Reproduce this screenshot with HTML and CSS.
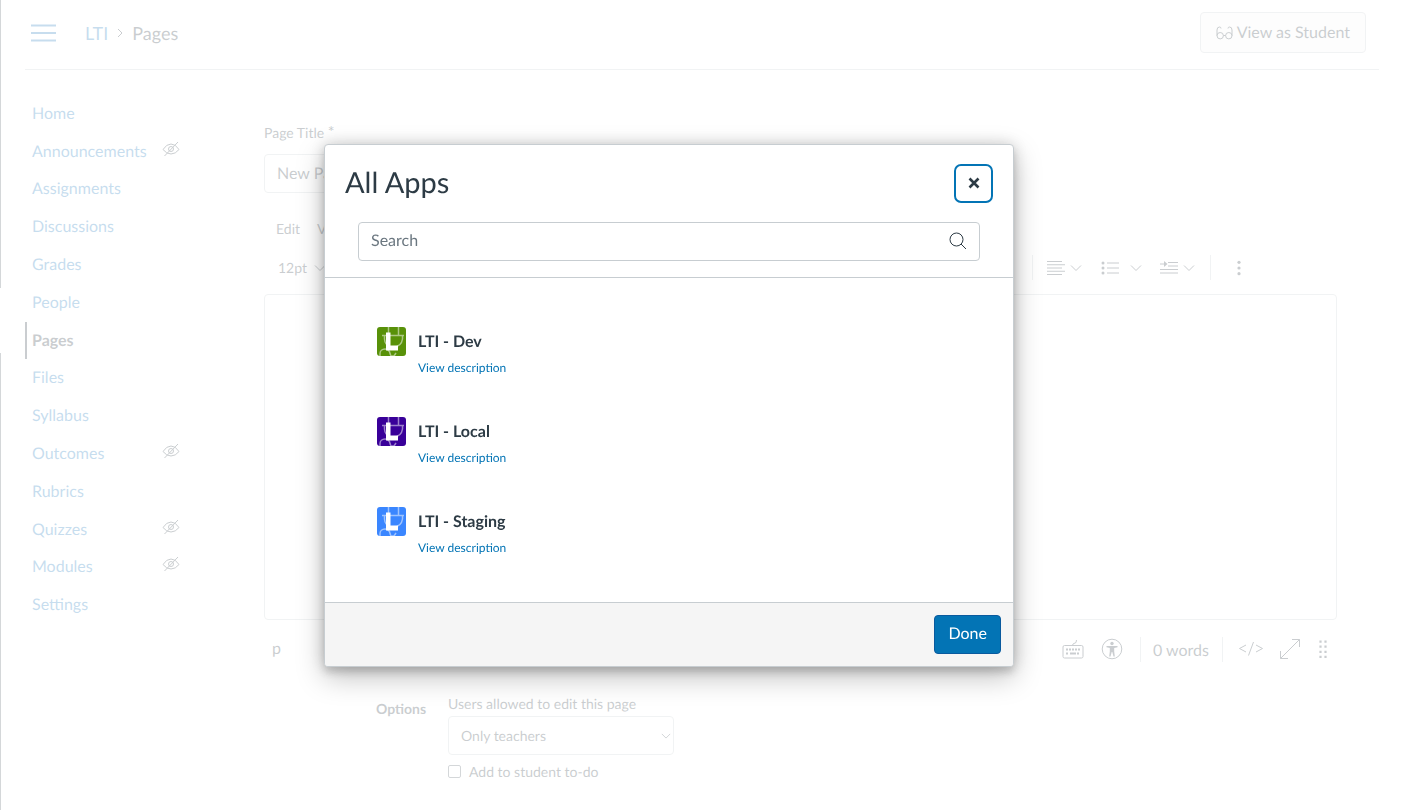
FILE: index.html
```html
<!DOCTYPE html>
<html lang="en">
<head>
<meta charset="utf-8">
<title>LTI: Pages</title>
<link rel="stylesheet" href="styles.css">
</head>
<body>
<svg class="defs" aria-hidden="true">
  <symbol id="hidden" viewBox="0 0 18 16"><path d="M1 8.500Q4.500 3 9 3T17 8.500Q13.500 13 9 13T1 8.500ZM2.500 15 16 1"/><circle cx="9" cy="8" r="2.500"/></symbol>
  <symbol id="chev" viewBox="0 0 12 8"><path d="M1 1.500 6 6.500 11 1.500"/></symbol>
  <symbol id="app" viewBox="0 0 29 29">
    <g fill="none" stroke="#fff" stroke-opacity=".5" stroke-width="1.500"><path d="M11.500 0V8M21.500 0V8M5 8.500H27M7.500 8.500V12Q8 18 13 20M25.500 8.500V12Q24.500 19.500 16 20.500M3 29V26.500A5 4.500 0 0 1 13 26.500L14 29H17L19 26"/></g>
    <path d="M9 5.500h4.500v13h7.500v5H9z" fill="#fff"/>
  </symbol>
</svg>
<div class="page">
  <div class="rail"><span class="rail-top"></span><span class="rail-bottom"></span></div>
  <div class="shell">
    <header class="topbar">
      <button class="icon-btn burger" aria-label="Course navigation"><svg width="25" height="18" viewBox="0 0 25 18"><path d="M0 1.500H25M0 9H25M0 16.500H25"/></svg></button>
      <nav class="crumbs" aria-label="Breadcrumb"><a href="#">LTI</a><svg width="6" height="10" viewBox="0 0 6 10"><path d="M1 1 5 5 1 9"/></svg><span>Pages</span></nav>
      <button class="student"><svg width="17" height="14" viewBox="0 0 17 14"><circle cx="4.200" cy="9.700" r="3.200"/><circle cx="12.800" cy="9.700" r="3.200"/><path d="M1 9.700V4Q1 1 3.500 1 5 1 5 2.500M16 9.700V4Q16 1 13.500 1 12 1 12 2.500M7.400 9.500h2.200"/></svg>View as Student</button>
    </header>
    <div class="columns">
      <nav class="course-nav" aria-label="Course">
        <ul>
          <li><a href="#">Home</a></li>
          <li><a href="#">Announcements</a><svg class="eye"><use href="#hidden"/></svg></li>
          <li><a href="#">Assignments</a></li>
          <li><a href="#">Discussions</a></li>
          <li><a href="#">Grades</a></li>
          <li><a href="#">People</a></li>
          <li class="active"><a href="#">Pages</a></li>
          <li><a href="#">Files</a></li>
          <li><a href="#">Syllabus</a></li>
          <li><a href="#">Outcomes</a><svg class="eye"><use href="#hidden"/></svg></li>
          <li><a href="#">Rubrics</a></li>
          <li><a href="#">Quizzes</a><svg class="eye"><use href="#hidden"/></svg></li>
          <li><a href="#">Modules</a><svg class="eye"><use href="#hidden"/></svg></li>
          <li><a href="#">Settings</a></li>
        </ul>
      </nav>
      <main class="editor">
        <label class="title-label" for="title">Page Title <span class="required">*</span></label>
        <input class="title-input" id="title" value="New Page">
        <div class="menubar"><button class="text-btn">Edit</button><button class="text-btn">View</button></div>
        <div class="toolbar">
          <button class="text-btn size">12pt<svg class="chev"><use href="#chev"/></svg></button>
          <div class="tools">
            <span class="sep"></span>
            <button class="icon-btn" aria-label="Align"><svg width="18" height="16" viewBox="0 0 18 16"><path d="M0 1.500H15M0 4.750H18M0 8H15M0 11.250H18M0 14.500H15"/></svg><svg class="chev"><use href="#chev"/></svg></button>
            <button class="icon-btn list" aria-label="List"><svg width="18" height="14" viewBox="0 0 18 14"><path d="M6 2H18M6 7H18M6 12H18"/><g class="solid"><circle cx="2" cy="2" r="1.500"/><circle cx="2" cy="7" r="1.500"/><circle cx="2" cy="12" r="1.500"/></g></svg><svg class="chev"><use href="#chev"/></svg></button>
            <button class="icon-btn" aria-label="Indent"><svg width="18" height="14" viewBox="0 0 18 14"><path d="M0 3H6M8 1.500H18M8 5H18M0 8.500H18M0 12H18"/><path class="solid" d="M4 0 7.500 3 4 6z"/></svg><svg class="chev"><use href="#chev"/></svg></button>
            <span class="sep"></span>
            <button class="icon-btn more" aria-label="More"><svg width="4" height="16" viewBox="0 0 4 16"><g class="solid"><circle cx="2" cy="2.300" r="1.600"/><circle cx="2" cy="8" r="1.600"/><circle cx="2" cy="13.700" r="1.600"/></g></svg></button>
          </div>
        </div>
        <textarea class="canvas" aria-label="Page body"></textarea>
        <div class="status">
          <span class="path">p</span>
          <button class="icon-btn" aria-label="Keyboard shortcuts"><svg width="22" height="20" viewBox="0 0 22 20"><rect x="1" y="6.500" width="20" height="12.500" rx="1.500"/><path d="M10.500 6.500 11 5 14 3.500 14.500 1"/><path stroke-width="2" stroke-dasharray="2 1" d="M4 10.500h14M4 14.500h3M15 14.500h3"/><path stroke-width="2" d="M8 14.500h6"/></svg></button>
          <button class="icon-btn a11y" aria-label="Accessibility checker"><svg width="22" height="22" viewBox="0 0 22 22"><circle cx="11" cy="11" r="9.800"/><circle class="solid" cx="11" cy="5.500" r="1.700"/><path class="solid" d="M5.500 8h11v1.300l-3.300.7v3.500l.6 5h-1.300L11.300 14h-.6l-1.200 4.500H8.200l.6-5V10l-3.300-.7z"/></svg></button>
          <span class="sep"></span><span class="words">0 words</span><span class="sep"></span>
          <button class="icon-btn code" aria-label="HTML editor"><svg width="26" height="14" viewBox="0 0 26 14"><path d="M8 3 1.500 6.500 8 10M18 3 24.500 6.500 18 10M15.500 0 10.500 13.500"/></svg></button>
          <button class="icon-btn full" aria-label="Fullscreen"><svg width="22" height="22" viewBox="0 0 22 22"><path d="M1.500 20.500 20.500 1.500M13 1.500H20.500V9M1.500 13V20.500H9"/></svg></button>
          <button class="icon-btn grip" aria-label="Resize"><svg width="8" height="18" viewBox="0 0 8 18"><path stroke-width="2.200" stroke-dasharray="2.200 2.900" d="M1.500.5V18M6.500.5V18"/></svg></button>
        </div>
        <div class="options">
          <strong>Options</strong>
          <div class="fields">
            <label for="who">Users allowed to edit this page</label>
            <div class="select-wrap"><select id="who"><option>Only teachers</option></select><svg class="chev"><use href="#chev"/></svg></div>
            <label class="todo"><input type="checkbox">Add to student to-do</label>
          </div>
        </div>
      </main>
    </div>
  </div>
</div>
<div class="mask">
  <section class="modal" role="dialog" aria-modal="true" aria-labelledby="apps-title">
    <div class="modal-head">
      <div class="modal-title"><h2 id="apps-title">All Apps</h2><button class="close" aria-label="Close"><svg width="12" height="12" viewBox="0 0 12 12"><path d="M1.500 1.500 10.500 10.500M10.500 1.500 1.500 10.500"/></svg></button></div>
      <div class="search"><input type="text" placeholder="Search" aria-label="Search"><svg width="18" height="18" viewBox="0 0 18 18"><circle cx="7.500" cy="7.500" r="6.500"/><path d="M12 12 17 17"/></svg></div>
    </div>
    <ul class="apps">
      <li><svg class="logo dev"><use href="#app"/></svg><div><h3>LTI - Dev</h3><a href="#">View description</a></div></li>
      <li><svg class="logo local"><use href="#app"/></svg><div><h3>LTI - Local</h3><a href="#">View description</a></div></li>
      <li><svg class="logo staging"><use href="#app"/></svg><div><h3>LTI - Staging</h3><a href="#">View description</a></div></li>
    </ul>
    <footer class="modal-foot"><button class="done">Done</button></footer>
  </section>
</div>
</body>
</html>
```
FILE: styles.css
```css
* { box-sizing: border-box; }
body { margin: 0; font: 16px/24px Lato, "Liberation Sans", sans-serif; color: #2d3b45; background: #fff; overflow: hidden; text-rendering: geometricPrecision; }
button, input, select, textarea { font: inherit; color: inherit; text-rendering: inherit; }
button { cursor: pointer; }
a { color: #0374b5; text-decoration: none; }
ul { list-style: none; margin: 0; padding: 0; }
h2, h3 { margin: 0; }
svg { display: block; flex: none; fill: none; stroke: currentColor; }
.defs { position: absolute; width: 0; height: 0; }
.solid { fill: currentColor; stroke: none; }
.page { display: flex; min-height: 100vh; }
.page a, .burger { color: #2079bc; }
.page .active a { color: inherit; }
.rail { width: 1px; display: flex; flex-direction: column; gap: 65px; }
.rail span { background: #566069; }
.rail-top { height: 288px; }
.rail-bottom { flex: 1; }
.shell { flex: 1; min-width: 0; padding: 0 41px 0 24px; }
.icon-btn, .text-btn { display: flex; align-items: center; padding: 0; border: 0; background: none; }
.topbar { display: flex; align-items: center; height: 70px; padding: 0 13px 4px 6px; border-bottom: 1px solid #c7cdd1; }
.page .burger { color: #2079bc; stroke-width: 2; }
.crumbs { display: flex; align-items: center; gap: 9px; margin-left: 29px; font-size: 18px; }
.student { display: flex; align-items: center; gap: 4px; margin-left: auto; height: 41px; padding: 0 15px; border: 1px solid #c7cdd1; border-radius: 4px; background: #f5f5f5; }
.columns { display: flex; }
.course-nav { width: 239px; padding-top: 25px; }
.course-nav ul { display: grid; grid-auto-rows: 1fr; min-height: 529px; }
.course-nav li { display: flex; align-items: center; justify-content: space-between; width: 155px; padding-left: 7px; }
.course-nav .active { padding-left: 5px; border-left: 2px solid #2d3b45; font-weight: 700; }
.eye { width: 18px; height: 16px; margin-bottom: 6px; }
.editor { flex: 1; min-width: 0; padding-top: 51px; margin-right: 42px; font-size: 14px; }
.title-label { display: block; line-height: 24px; }
.required { font-size: 16px; line-height: 16px; }
.title-input { display: block; width: 420px; height: 39px; margin-top: 9px; padding: 0 12px; border: 1px solid #c7cdd1; border-radius: 4px; font-size: 16px; }
.menubar { display: flex; gap: 17px; margin-top: 24px; padding-left: 12px; }
.toolbar { display: flex; justify-content: space-between; align-items: center; height: 53px; padding: 0 96px 0 14px; }
.size { gap: 7px; }
.tools { display: flex; align-items: center; }
.tools .icon-btn { gap: 5px; margin-left: 14px; }
.tools .icon-btn.list { gap: 11px; margin: 0 4px 0 19px; }
.tools .sep + .more { margin-left: 26px; }
.tools .sep:nth-of-type(2) { margin-left: 15px; }
.sep { width: 1px; height: 25px; background: #c7cdd1; }
.chev { width: 12px; height: 8px; }
.canvas { display: block; width: 100%; height: 326px; border: 1px solid #c7cdd1; border-radius: 4px; resize: none; }
.status { display: flex; align-items: center; height: 58px; padding: 0 10px 0 8px; font-size: 16px; }
.path { margin-right: auto; }
.a11y { margin: 0 17px; }
.words { margin: 3px 13px 0 12px; }
.code { margin-left: 15px; }
.full { margin: 0 18px 0 15px; }
.options { display: flex; gap: 20px; padding: 14px 0 0 112px; }
.options strong { min-width: 52px; padding-top: 5px; }
.fields { display: flex; flex-direction: column; }
.select-wrap { display: grid; align-items: center; width: 226px; }
.select-wrap > * { grid-area: 1 / 1; }
.select-wrap .chev { justify-self: end; margin-right: 3px; width: 10px; pointer-events: none; }
select { appearance: none; width: 100%; height: 39px; padding: 0 12px; border: 1px solid #c7cdd1; border-radius: 4px; background: #fff; }
.todo { display: flex; align-items: center; gap: 7px; margin-top: 5px; }
.todo input { appearance: none; width: 13px; height: 13px; margin: 0 1px 2px 0; border: 1px solid #566069; border-radius: 2px; }
.mask { position: fixed; inset: 0; display: flex; align-items: center; justify-content: center; padding-right: 82px; background: rgba(255,255,255,.75); }
.modal { width: 690px; border: 1px solid #c7cdd1; border-radius: 4px; background: #fff; box-shadow: 0 6px 7px rgba(0,0,0,.1), 0 10px 28px rgba(0,0,0,.25), 0 0 14px rgba(0,0,0,.16); overflow: hidden; }
.modal-head { padding: 19px 20px 16px; border-bottom: 1px solid #c7cdd1; }
.modal-title { display: flex; justify-content: space-between; align-items: center; }
h2 { font-size: 29px; line-height: 36px; font-weight: 400; }
.close { display: grid; place-items: center; width: 39px; height: 39px; padding: 0; border: 2px solid #0374b5; border-radius: 7px; background: #fff; stroke-width: 2.6; }
.search { display: flex; align-items: center; height: 39px; margin: 19px 13px 0; padding: 0 12px; border: 1px solid #c7cdd1; border-radius: 4px; }
.search input { flex: 1; min-width: 0; padding: 0; border: 0; outline: 0; background: none; }
.search input::placeholder { color: #6b7780; opacity: 1; }
.apps { display: grid; gap: 38px; padding: 49px 52px 43px; }
.apps li { display: flex; gap: 12px; }
.logo { width: 29px; height: 29px; border-radius: 3px; stroke: none; }
.dev { background: #589109; }
.local { background: #390099; }
.staging { background: #3a86ff; }
h3 { font-size: 16px; line-height: 30px; font-weight: 700; }
.apps a { display: block; font-size: 12px; line-height: 22px; }
.modal-foot { display: flex; justify-content: flex-end; padding: 12px; border-top: 1px solid #c7cdd1; background: #f5f5f5; }
.done { height: 39px; padding: 0 13px; border: 1px solid #0a5a9e; border-radius: 4px; background: #0374b5; color: #fff; }
```
